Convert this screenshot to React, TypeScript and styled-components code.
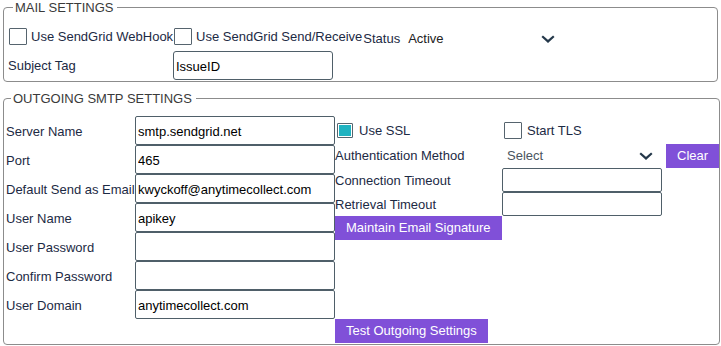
import React, { FC } from 'react';
import styled, { createGlobalStyle } from 'styled-components';

const GlobalStyle = createGlobalStyle`
  html, body {
    margin: 0;
    padding: 0;
    background: #ffffff;
  }
  body {
    font-family: "Liberation Sans", Arial, sans-serif;
    font-size: 13px;
    color: #1c2a44;
  }
`;

const Chevron: FC = () => (
    <svg width="14" height="8" viewBox="0 0 14 8">
        <path d="M1.2 1.2 L7 6.4 L12.8 1.2" fill="none" stroke="#24384a" strokeWidth="2.2" />
    </svg>
);

const App: FC = () => {
    const leftRows = [
        { label: 'Server Name', value: 'smtp.sendgrid.net' },
        { label: 'Port', value: '465' },
        { label: 'Default Send as Email', value: 'kwyckoff@anytimecollect.com' },
        { label: 'User Name', value: 'apikey' },
        { label: 'User Password', value: '' },
        { label: 'Confirm Password', value: '' },
        { label: 'User Domain', value: 'anytimecollect.com' },
    ];

    return (
        <Page>
            <GlobalStyle />
            <Fieldset $width={715} $padLeft={4} $padBottom={1}>
                <Legend>MAIL SETTINGS</Legend>
                <MailRow>
                    <CheckLabel $mr={1}>
                        <Box />
                        <span>Use SendGrid WebHook</span>
                    </CheckLabel>
                    <CheckLabel $mr={1}>
                        <Box />
                        <span>Use SendGrid Send/Receive</span>
                    </CheckLabel>
                    <StatusGroup>
                        <span>Status</span>
                        <StatusSelect>
                            <span>Active</span>
                            <Chevron />
                        </StatusSelect>
                    </StatusGroup>
                </MailRow>
                <SubjectRow>
                    <SubjectLabel>Subject Tag</SubjectLabel>
                    <TextInput $width={160} $height={29} $radius={3} defaultValue="IssueID" />
                </SubjectRow>
            </Fieldset>

            <Fieldset $width={717} $padLeft={2} $padBottom={1} $top={9}>
                <Legend>OUTGOING SMTP SETTINGS</Legend>
                <SmtpBody>
                    <LeftColumn>
                        {leftRows.map(row => (
                            <FieldRow key={row.label}>
                                <FieldLabel>{row.label}</FieldLabel>
                                <TextInput $width={200} $height={29} $radius={2} defaultValue={row.value} />
                            </FieldRow>
                        ))}
                    </LeftColumn>
                    <RightColumn>
                        <OptionRow>
                            <OptionCell>
                                <CheckLabel $gap={6}>
                                    <Box $checked $size={16} />
                                    <span>Use SSL</span>
                                </CheckLabel>
                            </OptionCell>
                            <CheckLabel $gap={5}>
                                <Box $size={18} />
                                <span>Start TLS</span>
                            </CheckLabel>
                        </OptionRow>
                        <AuthRow>
                            <OptionCell>Authentication Method</OptionCell>
                            <MethodSelect>
                                <span>Select</span>
                                <Chevron />
                            </MethodSelect>
                            <PurpleButton $ml={4}>Clear</PurpleButton>
                        </AuthRow>
                        <TimeoutRow>
                            <OptionCell>Connection Timeout</OptionCell>
                            <TextInput $width={160} $height={24} $radius={2} />
                        </TimeoutRow>
                        <TimeoutRow>
                            <OptionCell>Retrieval Timeout</OptionCell>
                            <TextInput $width={160} $height={24} $radius={2} />
                        </TimeoutRow>
                        <PurpleButton>Maintain Email Signature</PurpleButton>
                    </RightColumn>
                </SmtpBody>
                <Footer>
                    <PurpleButton>Test Outgoing Settings</PurpleButton>
                </Footer>
            </Fieldset>
        </Page>
    );
};

export default App;

// Styled Components
const Page = styled.div`
  width: 721px;
  height: 346px;
  padding-left: 3px;
  box-sizing: border-box;
  overflow: hidden;
`;

const Fieldset = styled.fieldset<{ $width: number; $padLeft: number; $padBottom: number; $top?: number }>`
  margin: ${p => p.$top ?? 0}px 0 0 0;
  width: ${p => p.$width}px;
  box-sizing: border-box;
  padding: 0 0 ${p => p.$padBottom}px ${p => p.$padLeft}px;
  border: 1px solid #8c8c8c;
  border-radius: 4px;
  min-width: 0;
`;

const Legend = styled.legend`
  margin-left: 5px;
  padding: 0 4px 0 2px;
  font-size: 13px;
  line-height: 15px;
  color: #3a3a3a;
`;

const MailRow = styled.div`
  display: flex;
  align-items: center;
  height: 24px;
  margin-top: 9px;
  padding-left: 1px;
`;

const CheckLabel = styled.label<{ $gap?: number; $mr?: number }>`
  display: flex;
  align-items: center;
  gap: ${p => p.$gap ?? 4}px;
  margin-right: ${p => p.$mr ?? 0}px;
  white-space: nowrap;
  line-height: 15px;
`;

const Box = styled.span<{ $checked?: boolean; $size?: number }>`
  display: inline-block;
  box-sizing: border-box;
  width: ${p => p.$size ?? 18}px;
  height: ${p => (p.$size ?? 18) - 1}px;
  border: 1px solid #56646e;
  border-radius: 1px;
  background: ${p => (p.$checked ? '#1fb3c1' : '#ffffff')};
  box-shadow: ${p => (p.$checked ? 'inset 0 0 0 1px #ffffff' : 'none')};
`;

const StatusGroup = styled.div`
  display: flex;
  align-items: center;
  margin-top: 5px;
  gap: 8px;
  color: #1c2a44;
`;

const StatusSelect = styled.div`
  display: flex;
  align-items: center;
  justify-content: space-between;
  width: 147px;
  color: #222222;
`;

const SubjectRow = styled.div`
  display: flex;
  align-items: center;
  margin-top: 2px;
  height: 30px;
`;

const SubjectLabel = styled.div`
  width: 165px;
  padding-top: 1px;
`;

const TextInput = styled.input<{ $width: number; $height: number; $radius: number }>`
  box-sizing: border-box;
  width: ${p => p.$width}px;
  height: ${p => p.$height}px;
  margin: 0;
  padding: 2px 0 0 2px;
  border: 1px solid #4f5f69;
  border-radius: ${p => p.$radius}px;
  font-family: "Liberation Sans", Arial, sans-serif;
  font-size: 13px;
  color: #000000;
  background: #ffffff;
  outline: none;
`;

const SmtpBody = styled.div`
  display: flex;
  margin-top: 10px;
`;

const LeftColumn = styled.div`
  display: flex;
  flex-direction: column;
`;

const FieldRow = styled.div`
  display: flex;
  align-items: center;
  height: 29px;
`;

const FieldLabel = styled.div`
  width: 129px;
  white-space: nowrap;
  padding-top: 1px;
`;

const RightColumn = styled.div`
  display: flex;
  flex-direction: column;
  align-items: flex-start;
`;

const OptionRow = styled.div`
  display: flex;
  align-items: center;
  height: 27px;
  padding-top: 1px;
  box-sizing: border-box;
`;

const OptionCell = styled.div`
  width: 167px;
  white-space: nowrap;
  & > label {
    margin-left: 2px;
  }
  & + label {
    margin-left: 2px;
  }
`;

const AuthRow = styled.div`
  display: flex;
  align-items: center;
  height: 25px;
`;

const MethodSelect = styled.div`
  display: flex;
  align-items: center;
  justify-content: space-between;
  box-sizing: border-box;
  width: 160px;
  padding: 0 9px 0 5px;
  color: #4a5560;
`;

const TimeoutRow = styled.div`
  display: flex;
  align-items: center;
  height: 24px;
`;

const PurpleButton = styled.div<{ $ml?: number }>`
  height: 24px;
  line-height: 24px;
  margin-left: ${p => p.$ml ?? 0}px;
  padding: 0 11px;
  background-color: #8050d8;
  color: #ffffff;
  font-size: 13px;
  white-space: nowrap;
  cursor: pointer;
`;

const Footer = styled.div`
  display: flex;
  padding-left: 329px;
`;
